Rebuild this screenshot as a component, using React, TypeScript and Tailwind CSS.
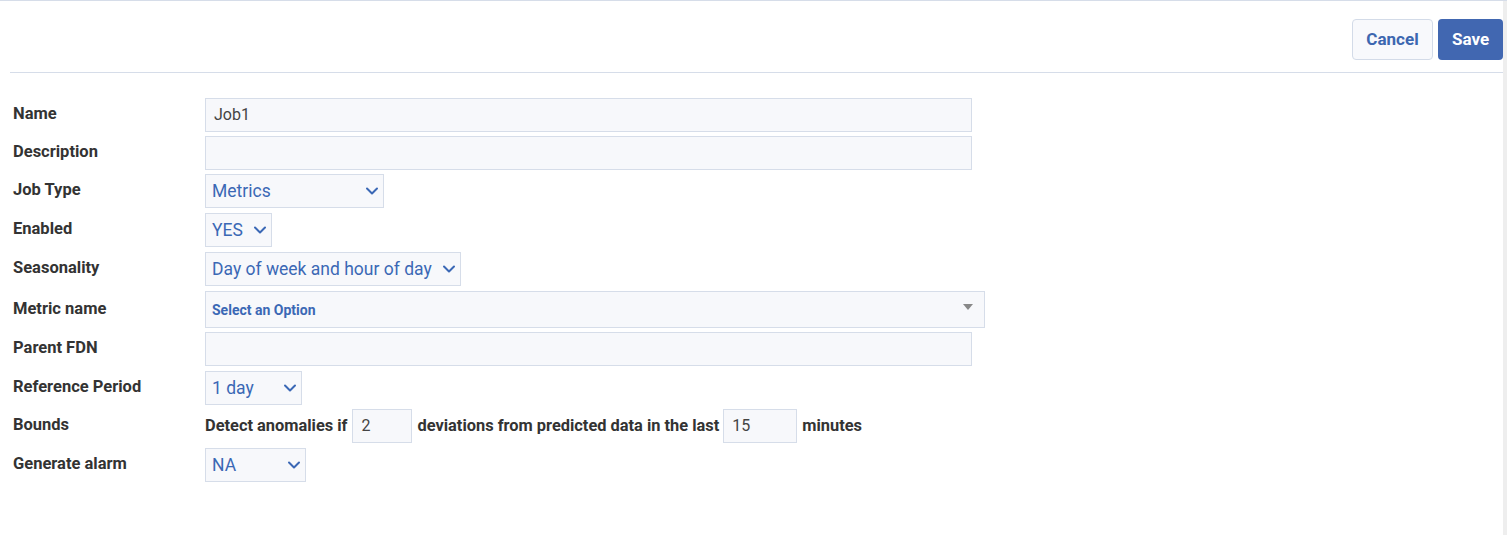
import { ChevronDown } from 'lucide-react'
import type { ReactNode } from 'react'

const field = 'h-[34px] border border-[#d6dde9] bg-[#f7f8fb]'

function Select({ value, width }: { value: string; width: string }) {
  return (
    <div className={`${field} ${width} flex items-center justify-between pl-[6px] pr-[1px] text-[17.5px] text-[#3b68b5]`}>
      <span>{value}</span>
      <ChevronDown size={20} strokeWidth={2.4} className="text-[#3b68b5]" />
    </div>
  )
}

function Input({ value = '', width }: { value?: string; width: string }) {
  return (
    <div className={`${field} ${width} flex items-center px-[8px] text-[16px] font-normal text-[#444]`}>
      {value}
    </div>
  )
}

function Row({ label, mt, children }: { label: string; mt: string; children: ReactNode }) {
  return (
    <div className={`flex items-center ${mt}`}>
      <div className="w-[195px] shrink-0 pl-[3px] pb-[1px] text-[16.5px] font-bold text-[#333]">{label}</div>
      {children}
    </div>
  )
}

export default function App() {
  return (
    <div
      className="flex h-[535px] w-full border-t border-[#d6dde9] bg-white"
      style={{ fontFamily: 'Roboto, "Liberation Sans", sans-serif' }}
    >
      <div className="flex-1 pl-[10px]">
        <div className="flex h-[72px] items-start justify-end gap-[5px] border-b border-[#d6dde9] pt-[18px]">
          <button className="h-[41px] w-[81px] rounded-[4px] border border-[#d3dbe8] bg-[#f8f9fc] text-[17px] font-bold text-[#3d67b0]">
            Cancel
          </button>
          <button className="h-[41px] w-[65px] rounded-[4px] bg-[#4167b1] text-[17px] font-bold text-white">
            Save
          </button>
        </div>

        <div className="flex flex-col pt-[25px]">
          <Row label="Name" mt="mt-0">
            <Input value="Job1" width="w-[767px]" />
          </Row>
          <Row label="Description" mt="mt-[4px]">
            <Input width="w-[767px]" />
          </Row>
          <Row label="Job Type" mt="mt-[4px]">
            <Select value="Metrics" width="w-[179px]" />
          </Row>
          <Row label="Enabled" mt="mt-[5px]">
            <Select value="YES" width="w-[67px]" />
          </Row>
          <Row label="Seasonality" mt="mt-[5px]">
            <Select value="Day of week and hour of day" width="w-[256px]" />
          </Row>
          <Row label="Metric name" mt="mt-[5px]">
            <div className="flex h-[37px] w-[780px] items-center justify-between border border-[#d6dde9] bg-[#f7f8fb] pl-[6px] pr-[11px]">
              <span className="pt-[2px] text-[14px] font-bold text-[#3b68b5]">Select an Option</span>
              <svg width="10" height="6" viewBox="0 0 10 6" className="mb-[6px]">
                <path d="M0 0h10L5 6z" fill="#888" />
              </svg>
            </div>
          </Row>
          <Row label="Parent FDN" mt="mt-[4px]">
            <Input width="w-[767px]" />
          </Row>
          <Row label="Reference Period" mt="mt-[5px]">
            <Select value="1 day" width="w-[97px]" />
          </Row>
          <Row label="Bounds" mt="mt-[4px]">
            <div className="flex items-center text-[16.4px] font-bold text-[#333]">
              <span>Detect anomalies if</span>
              <div className="ml-[5px] mr-[5px]">
                <Input value="2" width="w-[60px]" />
              </div>
              <span>deviations from predicted data in the last</span>
              <div className="ml-[4px] mr-[5px]">
                <Input value="15" width="w-[74px]" />
              </div>
              <span>minutes</span>
            </div>
          </Row>
          <Row label="Generate alarm" mt="mt-[5px]">
            <Select value="NA" width="w-[101px]" />
          </Row>
        </div>
      </div>
      <div className="w-[4px] bg-[#eeeeee]" />
    </div>
  )
}
